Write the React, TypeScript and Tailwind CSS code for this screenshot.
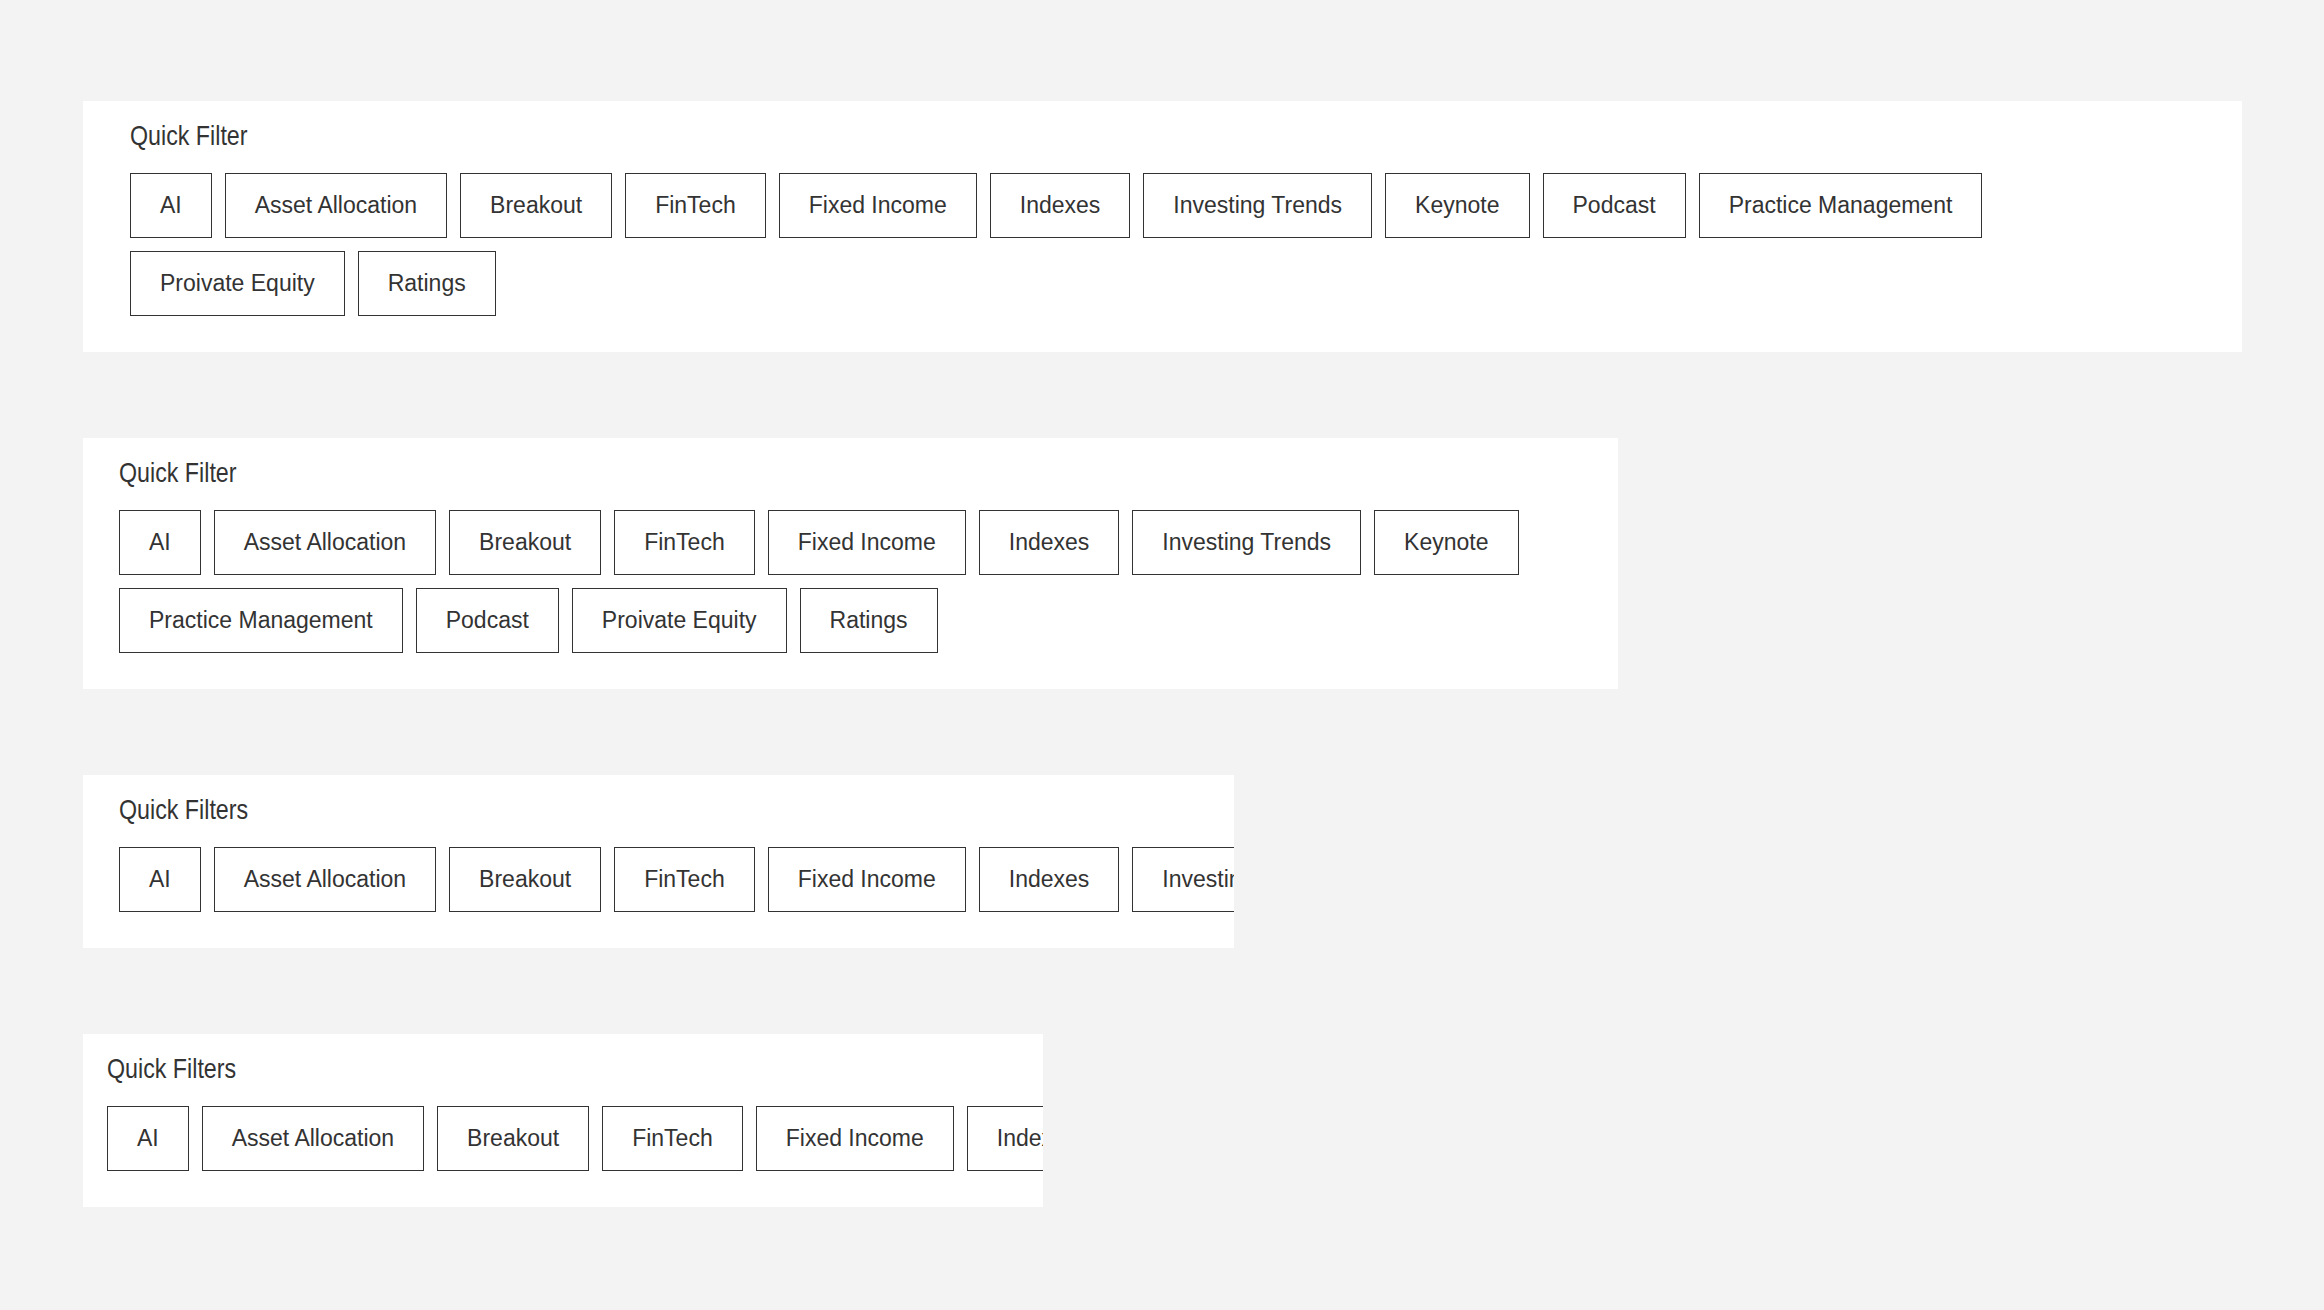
import React from "react";

const defaultTags = [
  "AI",
  "Asset Allocation",
  "Breakout",
  "FinTech",
  "Fixed Income",
  "Indexes",
  "Investing Trends",
  "Keynote",
  "Podcast",
  "Practice Management",
  "Proivate Equity",
  "Ratings",
];

// medium layout lists the long tag before Podcast
const mediumTags = [
  "AI",
  "Asset Allocation",
  "Breakout",
  "FinTech",
  "Fixed Income",
  "Indexes",
  "Investing Trends",
  "Keynote",
  "Practice Management",
  "Podcast",
  "Proivate Equity",
  "Ratings",
];

const fontStack = {
  fontFamily: '"Liberation Sans", Arial, sans-serif',
};

type QuickFilterProps = {
  title: string;
  tags: string[];
  widthClass: string;
  padClass: string;
  wrap?: boolean;
};

function Chip({ label }: { label: string }) {
  return (
    <button
      type="button"
      className="h-[65px] shrink-0 flex items-center border-[1.5px] border-[#333333] bg-white px-[29px] text-[23px] leading-none text-[#333333] whitespace-nowrap"
    >
      {label}
    </button>
  );
}

function QuickFilter({ title, tags, widthClass, padClass, wrap }: QuickFilterProps) {
  return (
    <section
      className={`${widthClass} ${padClass} bg-white pt-[19px] pb-[36px] overflow-hidden`}
    >
      {/* condensed heading */}
      <h2 className="origin-left scale-x-[0.83] text-[28px] leading-[32px] text-[#333333] mb-[21px] font-normal whitespace-nowrap">
        {title}
      </h2>
      <div
        className={
          wrap
            ? "flex flex-wrap gap-[13px]"
            : "flex flex-nowrap gap-[13px]"
        }
      >
        {tags.map((tag) => (
          <Chip key={tag} label={tag} />
        ))}
      </div>
    </section>
  );
}

export default function App() {
  return (
    <div className="min-h-[1310px] w-full bg-[#f3f3f3] pt-[101px] pl-[83px]" style={fontStack}>
      <div className="flex flex-col items-start gap-[86px]">
        {/* xl */}
        <QuickFilter
          title="Quick Filter"
          tags={defaultTags}
          widthClass="w-[2159px]"
          padClass="pl-[47px] pr-[48px]"
          wrap
        />
        {/* lg */}
        <QuickFilter
          title="Quick Filter"
          tags={mediumTags}
          widthClass="w-[1535px]"
          padClass="pl-[36px] pr-[36px]"
          wrap
        />
        <QuickFilter
          title="Quick Filters"
          tags={defaultTags}
          widthClass="w-[1151px]"
          padClass="pl-[36px]"
        />
        {/* sm */}
        <QuickFilter
          title="Quick Filters"
          tags={defaultTags}
          widthClass="w-[960px]"
          padClass="pl-[24px]"
        />
      </div>
    </div>
  );
}
